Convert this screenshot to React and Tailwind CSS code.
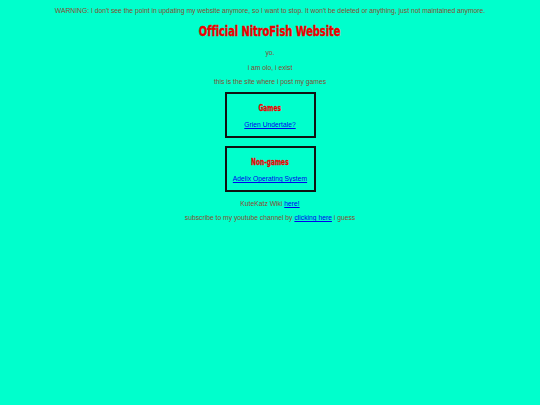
export default function App() {
  const boxes = [
    { title: "Games", link: "Grien Undertale?" },
    { title: "Non-games", link: "Adelix Operating System" },
  ];

  return (
    <div className="w-full min-h-[405px] bg-[#00ffcc] text-[#8a4a30] text-[6.75px] leading-[8px] font-['Liberation_Sans',Arial,sans-serif] flex flex-col items-center text-center">
      <p className="mt-[7px]">
        WARNING: I don't see the point in updating my website anymore, so I want to stop. It won't be deleted or anything, just not maintained anymore.
      </p>

      <h1 className="mt-[9px] h-[14px] leading-[14px] text-[14px] font-bold text-[#ee0000] font-['DejaVu_Sans_Condensed',sans-serif] scale-x-[0.79] tracking-[-0.1px] [-webkit-text-stroke:0.4px_#ee0000]">
        Official NitroFish Website
      </h1>

      <p className="mt-[11px]">yo.</p>
      <p className="mt-[7px]">i am olo, i exist</p>
      <p className="mt-[6px]">this is the site where i post my games</p>

      {boxes.map((box, i) => (
        <div
          key={box.title}
          className={`${i === 0 ? "mt-[6px]" : "mt-[8px]"} w-[91px] h-[46px] border-2 border-[#111] flex flex-col items-center pt-[11px]`}
        >
          <h3 className="h-[8px] leading-[8px] text-[8px] font-bold text-[#ee0000] font-['DejaVu_Sans_Condensed',sans-serif] scale-x-[0.82] [-webkit-text-stroke:0.3px_#ee0000]">
            {box.title}
          </h3>
          <a href="#" className="mt-[8px] text-[#0000ee] underline">
            {box.link}
          </a>
        </div>
      ))}

      <p className="mt-[8px]">
        KuteKatz Wiki <a href="#" className="text-[#0000ee] underline">here!</a>
      </p>
      <p className="mt-[6px]">
        subscribe to my youtube channel by{" "}
        <a href="#" className="text-[#0000ee] underline">clicking here</a> i guess
      </p>
    </div>
  );
}
